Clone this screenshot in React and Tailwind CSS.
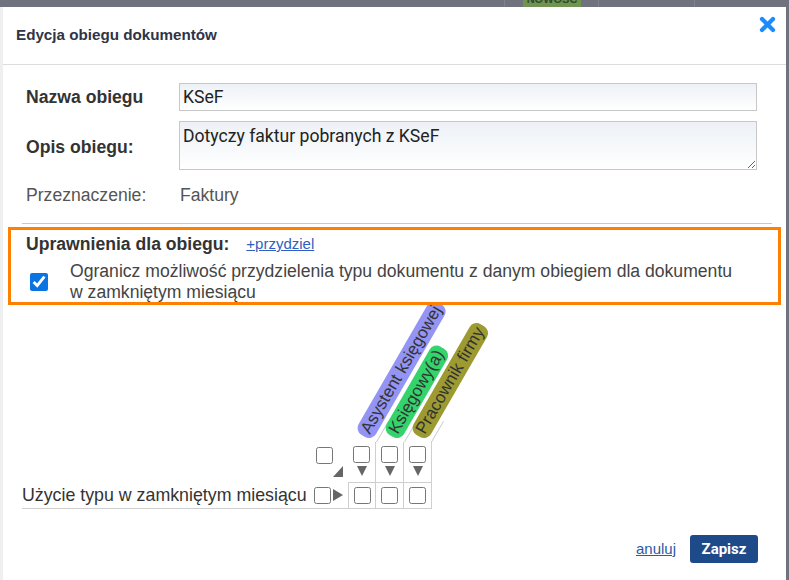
import React from "react";

const Check = ({ checked = false, className = "" }) => (
  <input
    type="checkbox"
    readOnly
    checked={checked}
    className={"m-0 w-[17px] h-[17px] accent-[#0b74e5] " + className}
  />
);

const TriDown = () => (
  <svg width="10" height="10" viewBox="0 0 10 10" className="mt-[3px]">
    <polygon points="0,0 10,0 5,10" fill="#666" />
  </svg>
);

const roles = [
  { name: "Asystent księgowej", bg: "bg-[#9494f4]", left: "left-[350px]" },
  { name: "Księgowy(a)", bg: "bg-[#34d36b]", left: "left-[378px]" },
  { name: "Pracownik firmy", bg: "bg-[#9c9a31]", left: "left-[405px]" },
];

const lines = ["left-[354px]", "left-[382px]", "left-[409px]"];

export default function App() {
  return (
    <div className="w-[789px] h-[580px] bg-[#70737e] overflow-hidden flex flex-col font-['Liberation_Sans',Arial,sans-serif]">
      {/* top bar behind the dialog */}
      <div className="h-[7px] flex shrink-0">
        <div className="w-[505px] border-r border-[#7f828c]" />
        <div className="w-[18px]" />
        <div className="w-[58px] bg-[#6f9350] text-[11px] leading-[7px] font-bold text-[#2f4a2c] text-center overflow-hidden">
          <span className="relative -top-[4px]">NOWOŚĆ</span>
        </div>
        <div className="w-[18px] border-r border-[#7f828c]" />
        <div className="w-[96px] border-r border-[#7f828c]" />
      </div>

      <div className="flex flex-1 min-h-0">
        <div className="w-[3px] bg-[#efefef]" />

        {/* dialog */}
        <div className="w-[783px] bg-white flex flex-col">
          {/* header */}
          <div className="h-[58px] border-b border-[#dcdcdc] flex items-center justify-between pl-[13px] pr-[10px] relative">
            <h1 className="text-[15.2px] font-bold text-[#2f3446]">Edycja obiegu dokumentów</h1>
            <svg width="17" height="17" viewBox="0 0 17 17" className="absolute top-[9px] right-[10px]">
              <line x1="3" y1="3" x2="14" y2="14" stroke="#1a8cff" strokeWidth="4.2" strokeLinecap="round" />
              <line x1="14" y1="3" x2="3" y2="14" stroke="#1a8cff" strokeWidth="4.2" strokeLinecap="round" />
            </svg>
          </div>

          {/* form */}
          <div className="pl-[23px] pt-[18px]">
            <div className="flex items-center">
              <label className="w-[153px] text-[17.6px] font-bold text-[#333]">Nazwa obiegu</label>
              <input
                readOnly
                defaultValue="KSeF"
                className="w-[578px] h-[28px] border border-[#c8c8c8] px-[3px] bg-gradient-to-b from-[#edf1f6] to-white text-[17.6px] text-[#222] font-['Roboto',sans-serif] outline-none"
              />
            </div>
            <div className="flex items-center mt-[10px]">
              <label className="w-[153px] text-[17.6px] font-bold text-[#333] pt-[4px]">Opis obiegu:</label>
              <textarea
                readOnly
                defaultValue="Dotyczy faktur pobranych z KSeF"
                className="w-[578px] h-[49px] border border-[#c8c8c8] px-[3px] pt-[3px] bg-gradient-to-b from-[#edf1f6] to-white text-[17.6px] leading-[22px] text-[#222] font-['Roboto',sans-serif] outline-none"
              />
            </div>
            <div className="flex items-center mt-[15px] h-[20px] text-[17.6px] text-[#555]">
              <span className="w-[154px]">Przeznaczenie:</span>
              <span>Faktury</span>
            </div>
          </div>

          <div className="mt-[18px] ml-[19px] mr-[14px] border-t border-[#c8c8c8]" />

          {/* permissions box */}
          <div className="mt-[3px] ml-[5px] w-[773px] h-[78px] border-[3px] border-[#ff8000] pl-[15px] pt-[4px]">
            <div className="flex items-center h-[20px]">
              <span className="text-[17.6px] font-bold text-[#333]">Uprawnienia dla obiegu:</span>
              <a href="#" className="ml-[17px] text-[15px] text-[#2f5fc0] underline">+przydziel</a>
            </div>
            <div className="flex items-start mt-[7px]">
              <input type="checkbox" readOnly checked className="m-0 mt-[12px] ml-[4px] w-[18px] h-[18px] accent-[#0b74e5]" />
              <p className="ml-[22px] w-[678px] text-[17.6px] leading-[21px] text-[#444]">
                Ogranicz możliwość przydzielenia typu dokumentu z danym obiegiem dla dokumentu w zamkniętym miesiącu
              </p>
            </div>
          </div>

          {/* matrix */}
          <div className="ml-[19px]">
            <div className="relative w-[600px] h-[137px] overflow-hidden">
              {lines.map((l) => (
                <div key={l} className={"absolute bottom-0 w-px h-[24px] bg-[#cfcfcf] origin-bottom rotate-[30deg] " + l} />
              ))}
              {roles.map((r) => (
                <div
                  key={r.name}
                  className={"absolute top-[116px] h-[20px] px-[4px] rounded-[8px] origin-bottom-left rotate-[-60deg] whitespace-nowrap text-[17px] leading-[20px] text-[#333] " + r.bg + " " + r.left}
                >
                  {r.name}
                </div>
              ))}
            </div>

            <div className="flex h-[40px]">
              <div className="w-[326px] flex justify-end pr-[5px]">
                <Check className="mt-[5px]" />
                <svg width="10" height="11" viewBox="0 0 10 11" className="self-end mb-[5px]">
                  <polygon points="10,0 10,11 0,11" fill="#666" />
                </svg>
              </div>
              {[0, 1, 2].map((i) => (
                <div key={i} className="w-[28px] border-r border-[#cfcfcf] flex flex-col items-center pt-[4px]">
                  <Check />
                  <TriDown />
                </div>
              ))}
            </div>

            <div className="flex h-[27px]">
              <div className="w-[326px] border-b border-[#cfcfcf] flex items-center pr-[5px]">
                <span className="text-[17.8px] text-[#333]">Użycie typu w zamkniętym miesiącu</span>
                <Check className="ml-auto" />
                <svg width="10" height="12" viewBox="0 0 10 12" className="ml-[2px]">
                  <polygon points="0,0 10,6 0,12" fill="#666" />
                </svg>
              </div>
              {[0, 1, 2].map((i) => (
                <div
                  key={i}
                  className={"w-[28px] border-y border-r border-[#cfcfcf] flex items-center justify-center " + (i === 0 ? "border-l" : "")}
                >
                  <Check />
                </div>
              ))}
            </div>
          </div>

          {/* footer */}
          <div className="mt-[26px] flex items-center justify-end pr-[28px] gap-[14px]">
            <a href="#" className="text-[15px] text-[#2e5aa0] underline">anuluj</a>
            <button className="w-[68px] h-[28px] rounded-[3px] bg-[#1f4a8a] text-white text-[15px] font-bold font-['Roboto',sans-serif]">
              Zapisz
            </button>
          </div>
        </div>
      </div>
    </div>
  );
}
